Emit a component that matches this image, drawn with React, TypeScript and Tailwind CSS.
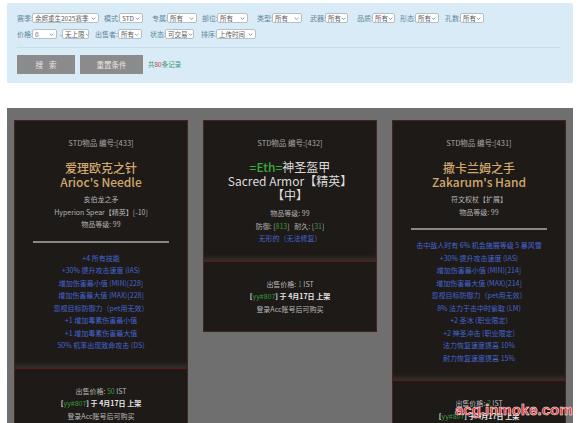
import React from "react";

const cjk = { fontFamily: '"Noto Sans CJK SC", "Noto Sans", sans-serif' };

interface FilterItem {
  label: string;
  value: string;
  w: string;
  lw: string;
  ml: string;
}

const row1: FilterItem[] = [
  { label: "赛季:", value: "余烬重生2025赛季", w: "w-[67px]", lw: "w-[15px]", ml: "ml-0" },
  { label: "模式:", value: "STD", w: "w-[24px]", lw: "w-[15px]", ml: "ml-[5px]" },
  { label: "专属:", value: "所有", w: "w-[30px]", lw: "w-[15px]", ml: "ml-[9px]" },
  { label: "部位:", value: "所有", w: "w-[31px]", lw: "w-[15px]", ml: "ml-[5px]" },
  { label: "类型:", value: "所有", w: "w-[30px]", lw: "w-[15px]", ml: "ml-[9px]" },
  { label: "武器:", value: "所有", w: "w-[23px]", lw: "w-[15px]", ml: "ml-[8px]" },
  { label: "品质:", value: "所有", w: "w-[23px]", lw: "w-[15px]", ml: "ml-[9px]" },
  { label: "形态:", value: "所有", w: "w-[24px]", lw: "w-[15px]", ml: "ml-[5px]" },
  { label: "孔数:", value: "所有", w: "w-[24px]", lw: "w-[15px]", ml: "ml-[6px]" },
];

const Chevron = () => (
  <svg viewBox="0 0 8 5" className="w-[5px] h-[3px] shrink-0">
    <path d="M1 1l3 3 3-3" fill="none" stroke="#666" strokeWidth="1.1" />
  </svg>
);

function Sel({ value, w }: { value: string; w: string }) {
  return (
    <span
      className={`${w} shrink-0 h-[10px] bg-white border border-[#b3c0c8] rounded-[2px] flex items-center justify-between px-[2px] text-[6.5px] text-[#5a5a5a] leading-none whitespace-nowrap overflow-hidden`}
    >
      <span>{value}</span>
      <Chevron />
    </span>
  );
}

function Label({ text, cls }: { text: string; cls: string }) {
  return (
    <span className={`${cls} shrink-0 text-[7px] text-[#5e889c] whitespace-nowrap leading-none`}>{text}</span>
  );
}

function Filter({ item }: { item: FilterItem }) {
  return (
    <div className={`flex items-center shrink-0 ${item.ml}`}>
      <Label text={item.label} cls={item.lw} />
      <Sel value={item.value} w={item.w} />
    </div>
  );
}

function Card({ top, bottom }: { top: React.ReactNode; bottom: React.ReactNode }) {
  return (
    <div className="bg-[#1d1a17] border border-[#43241f] flex flex-col text-center">
      <div className="pt-[16px] pb-[16px] shadow-[inset_0_-6px_6px_-4px_rgba(120,110,104,0.35)] border-b border-[#5e1a18]">
        {top}
      </div>
      <div className="pt-[16px] pb-[16px] text-[7px] leading-[12.5px] text-[#b9b9b9]">{bottom}</div>
    </div>
  );
}

function Head({ no }: { no: string }) {
  return <div className="text-[7.5px] leading-[12px] text-[#a8a8a8]">STD物品 编号:[{no}]</div>;
}

function Divider() {
  return <div className="mx-[18px] mt-[10px] h-[2px] bg-[#8a8784]" />;
}

function Stats({ lines }: { lines: string[] }) {
  return (
    <div className="mt-[9px] text-[7px] leading-[12.5px] text-[#4766d2]">
      {lines.map((l) => (
        <div key={l}>{l}</div>
      ))}
    </div>
  );
}

function Sale({ price }: { price: string }) {
  return (
    <>
      <div>
        出售价格: <span className="text-[#3a9a3a]">{price}</span> IST
      </div>
      <div className="text-[#e8e8e8] font-bold">
        [<span className="text-[#3a9a3a] font-normal">yy#807</span>] 于 4月17日 上架
      </div>
      <div>登录Acc账号后可购买</div>
    </>
  );
}

export default function App() {
  return (
    <div className="relative min-h-screen bg-white pt-[3px]" style={cjk}>
      {/* 筛选条件 */}
      <div className="mx-[7px] bg-[#d9ebf6] rounded-[2px] pt-[10px] pl-[10px] pr-[13px] pb-[9px]">
        <div className="border-b border-[#c7dde9] pb-[8px]">
          <div className="flex items-center">
            {row1.map((it) => (
              <Filter key={it.label} item={it} />
            ))}
          </div>
          <div className="flex items-center mt-[6px]">
            <Label text="价格:" cls="w-[15px]" />
            <Sel value="0" w="w-[25px]" />
            <Label text="-" cls="ml-[3px] w-[2px]" />
            <Sel value="无上限" w="w-[27px]" />
            <Label text="出售者:" cls="ml-[6px] w-[23px]" />
            <Sel value="所有" w="w-[24px]" />
            <Label text="状态:" cls="ml-[8px] w-[15px]" />
            <Sel value="可交易" w="w-[29px]" />
            <Label text="排序:" cls="ml-[7px] w-[15px]" />
            <Sel value="上传时间" w="w-[40px]" />
          </div>
        </div>
        <div className="flex items-center mt-[7px]">
          <button className="w-[58px] h-[19px] bg-[#8b8b8b] text-[#e6e6e6] text-[7.5px] tracking-[6px] pl-[6px]">搜索</button>
          <button className="ml-[5px] w-[63px] h-[19px] bg-[#8b8b8b] text-[#e6e6e6] text-[7.5px]">重置条件</button>
          <span className="ml-[5px] text-[6.5px] text-[#3d9a78]">
            共<span className="text-[#d43434]">80</span>条记录
          </span>
        </div>
      </div>

      {/* 物品列表 */}
      <div className="mx-[7px] mt-[25px] bg-[#6f6f6f] pt-[12px] px-[7px] pb-[20px] grid grid-cols-3 gap-[15px] items-start">
        <Card
          top={
            <>
              <Head no="433" />
              <div className="mt-[12px] text-[12px] leading-[14px] font-medium text-[#d2a86e]">
                <div>爱理欧克之针</div>
                <div>Arioc's Needle</div>
              </div>
              <div className="mt-[4px] text-[7px] leading-[12.5px] text-[#b4b4b4]">
                <div>亥伯龙之矛</div>
                <div>Hyperion Spear【精英】[-10]</div>
                <div>物品等级: 99</div>
              </div>
              <Divider />
              <Stats
                lines={[
                  "+4 所有技能",
                  "+30% 提升攻击速度 (IAS)",
                  "增加伤害最小值 (MIN)[228]",
                  "增加伤害最大值 (MAX)[228]",
                  "忽视目标防御力（pet用无效）",
                  "+1 增加毒素伤害最小值",
                  "+1 增加毒素伤害最大值",
                  "50% 机率出现致命攻击 (DS)",
                ]}
              />
            </>
          }
          bottom={<Sale price="50" />}
        />
        <Card
          top={
            <>
              <Head no="432" />
              <div className="mt-[11px] text-[12px] leading-[14px] text-[#dcdcdc]">
                <div>
                  <span className="text-[#3aa83a] font-medium">=Eth=</span>神圣盔甲
                </div>
                <div>Sacred Armor【精英】</div>
                <div>【中】</div>
              </div>
              <div className="mt-[5px] text-[7px] leading-[12.5px] text-[#b4b4b4]">
                <div>物品等级: 99</div>
                <div>
                  防御: [<span className="text-[#3a9a3a]">813</span>]&nbsp;&nbsp; 耐久: [
                  <span className="text-[#3a9a3a]">31</span>]
                </div>
                <div className="text-[#4766d2]">无形的（无法修复）</div>
              </div>
            </>
          }
          bottom={<Sale price="1" />}
        />
        <Card
          top={
            <>
              <Head no="431" />
              <div className="mt-[12px] text-[12px] leading-[14px] font-medium text-[#d2a86e]">
                <div>撒卡兰姆之手</div>
                <div>Zakarum's Hand</div>
              </div>
              <div className="mt-[4px] text-[7px] leading-[12.5px] text-[#b4b4b4]">
                <div>符文权杖【扩展】</div>
                <div>物品等级: 99</div>
              </div>
              <Divider />
              <Stats
                lines={[
                  "击中敌人时有 6% 机会施展等级 5 暴风雪",
                  "+30% 提升攻击速度 (IAS)",
                  "增加伤害最小值 (MIN)[214]",
                  "增加伤害最大值 (MAX)[214]",
                  "忽视目标防御力（pet用无效）",
                  "8% 法力于击中时偷取 (LM)",
                  "+2 圣冰 (职业限定)",
                  "+2 神圣冲击 (职业限定)",
                  "法力恢复速度提高 10%",
                  "耐力恢复速度提高 15%",
                ]}
              />
            </>
          }
          bottom={<Sale price="2" />}
        />
      </div>

      {/* 水印 */}
      <div
        className="absolute top-[399px] left-[455px] text-[15px] font-bold text-[#e3262b] [-webkit-text-stroke:0.5px_white]"
        style={{ fontFamily: '"Liberation Sans", Arial, sans-serif' }}
      >
        acg.inmoke.com
      </div>
    </div>
  );
}
